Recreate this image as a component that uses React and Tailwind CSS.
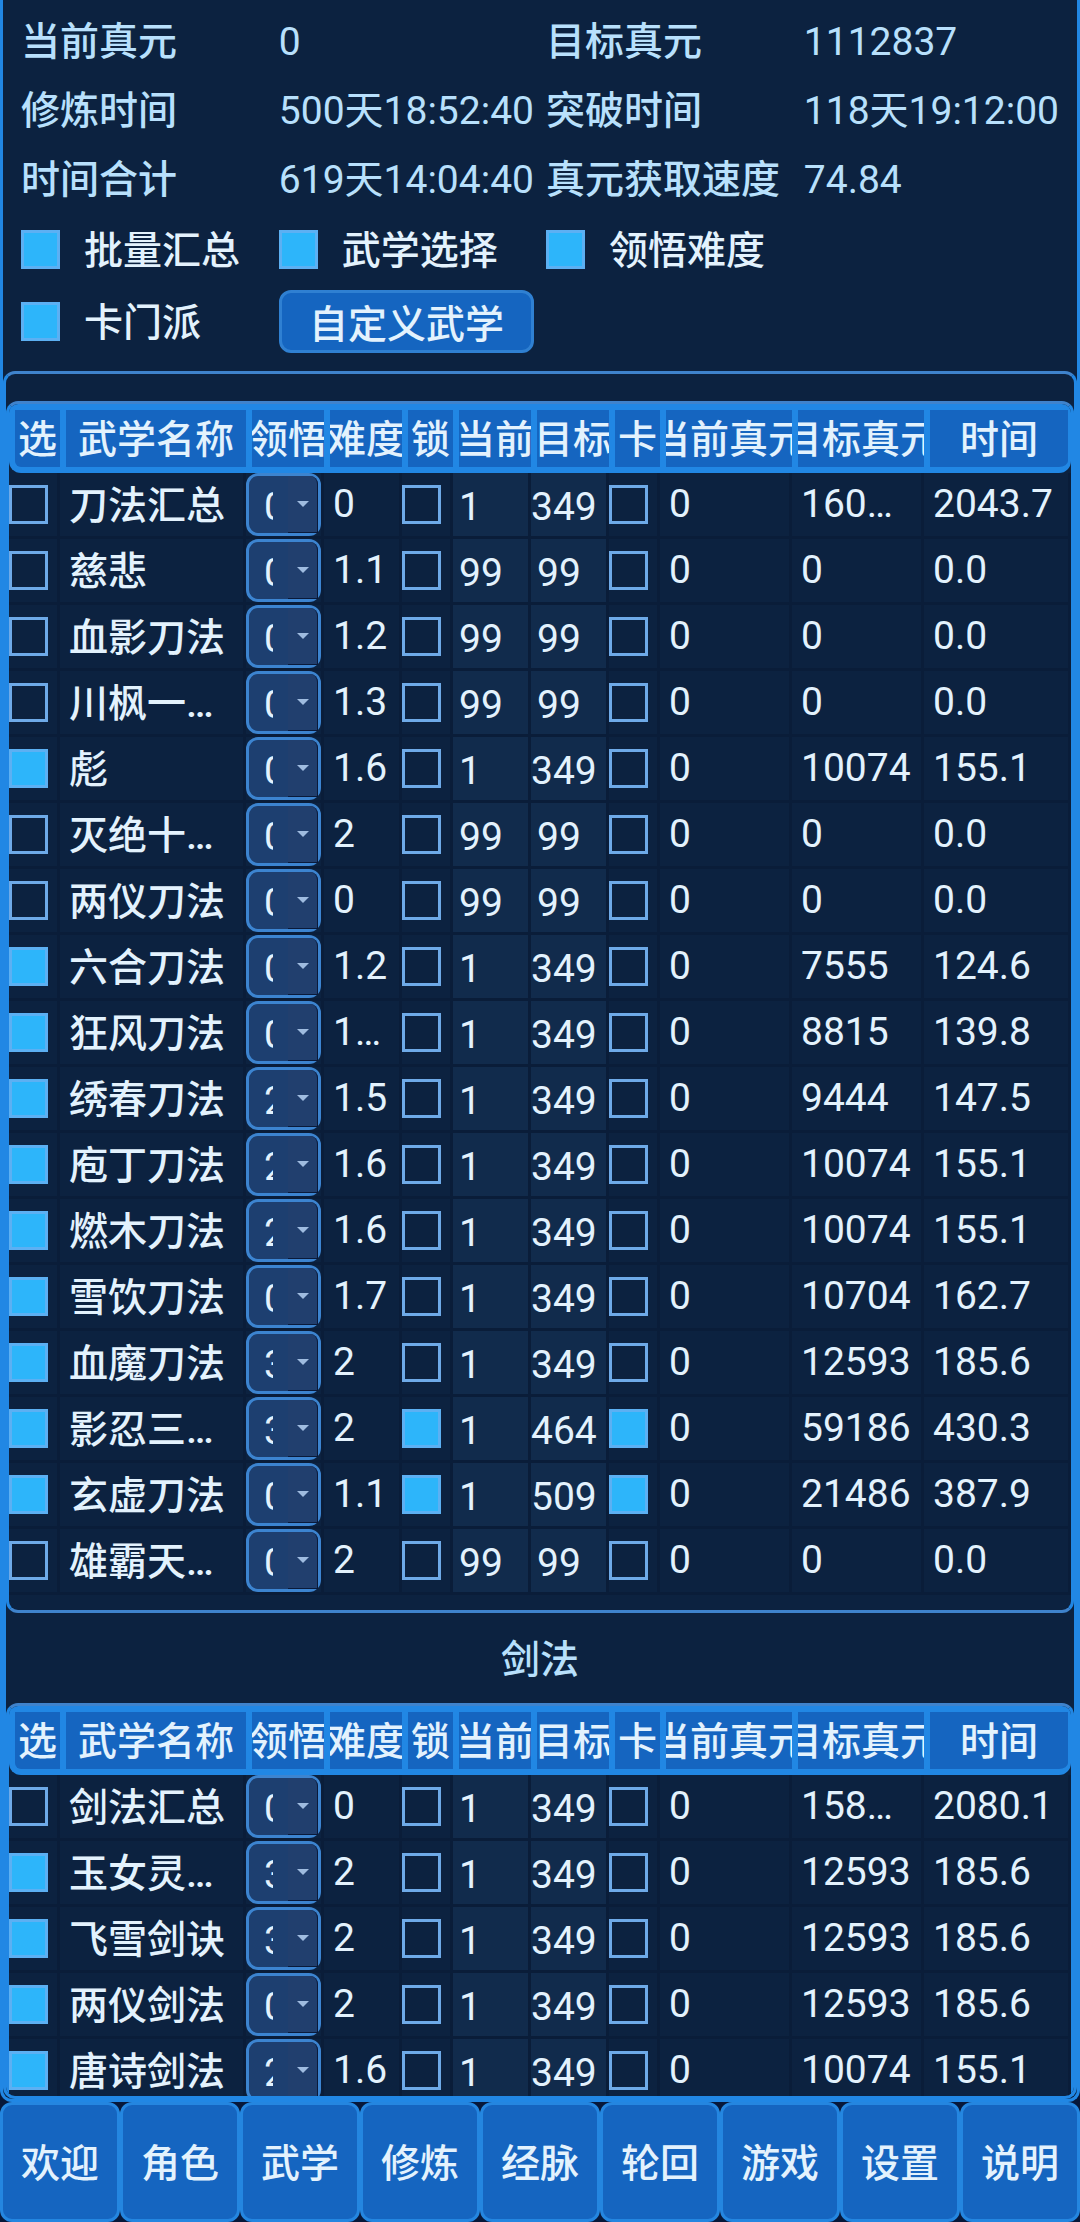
import React from "react";

const stats = [
  ["当前真元", "0"],
  ["目标真元", "1112837"],
  ["修炼时间", "500天18:52:40"],
  ["突破时间", "118天19:12:00"],
  ["时间合计", "619天14:04:40"],
  ["真元获取速度", "74.84"],
];

const headers = ["选", "武学名称", "领悟", "难度", "锁", "当前", "目标", "卡", "当前真元", "目标真元", "时间"];

// selected, name, insight, difficulty, locked, current, target, gated, current energy, target energy, time
const blades = [
  [0, "刀法汇总", "0", "0", 0, "1", "349", 0, "0", "160…", "2043.7"],
  [0, "慈悲", "0", "1.1", 0, "99", "99", 0, "0", "0", "0.0"],
  [0, "血影刀法", "0", "1.2", 0, "99", "99", 0, "0", "0", "0.0"],
  [0, "川枫一…", "0", "1.3", 0, "99", "99", 0, "0", "0", "0.0"],
  [1, "彪", "0", "1.6", 0, "1", "349", 0, "0", "10074", "155.1"],
  [0, "灭绝十…", "0", "2", 0, "99", "99", 0, "0", "0", "0.0"],
  [0, "两仪刀法", "0", "0", 0, "99", "99", 0, "0", "0", "0.0"],
  [1, "六合刀法", "0", "1.2", 0, "1", "349", 0, "0", "7555", "124.6"],
  [1, "狂风刀法", "0", "1…", 0, "1", "349", 0, "0", "8815", "139.8"],
  [1, "绣春刀法", "2", "1.5", 0, "1", "349", 0, "0", "9444", "147.5"],
  [1, "庖丁刀法", "2", "1.6", 0, "1", "349", 0, "0", "10074", "155.1"],
  [1, "燃木刀法", "2", "1.6", 0, "1", "349", 0, "0", "10074", "155.1"],
  [1, "雪饮刀法", "0", "1.7", 0, "1", "349", 0, "0", "10704", "162.7"],
  [1, "血魔刀法", "3", "2", 0, "1", "349", 0, "0", "12593", "185.6"],
  [1, "影忍三…", "3", "2", 1, "1", "464", 1, "0", "59186", "430.3"],
  [1, "玄虚刀法", "0", "1.1", 1, "1", "509", 1, "0", "21486", "387.9"],
  [0, "雄霸天…", "0", "2", 0, "99", "99", 0, "0", "0", "0.0"],
];

const swords = [
  [0, "剑法汇总", "0", "0", 0, "1", "349", 0, "0", "158…", "2080.1"],
  [1, "玉女灵…", "3", "2", 0, "1", "349", 0, "0", "12593", "185.6"],
  [1, "飞雪剑诀", "3", "2", 0, "1", "349", 0, "0", "12593", "185.6"],
  [1, "两仪剑法", "0", "2", 0, "1", "349", 0, "0", "12593", "185.6"],
  [1, "唐诗剑法", "2", "1.6", 0, "1", "349", 0, "0", "10074", "155.1"],
];

const tabs = ["欢迎", "角色", "武学", "修炼", "经脉", "轮回", "游戏", "设置", "说明"];

function Check({ on, label }) {
  return (
    <input
      type="checkbox"
      defaultChecked={Boolean(on)}
      aria-label={label}
      className="block size-[39px] shrink-0 appearance-none border-3 border-[#6eaae8] checked:border-[#5cb0f3] checked:bg-[#2db5fa]"
    />
  );
}

function Toggle({ children }) {
  return (
    <label className="flex h-[57px] items-center gap-6 font-medium whitespace-nowrap text-[#e3f2fd]">
      <Check on />
      <span className="pt-1">{children}</span>
    </label>
  );
}

function Insight({ value, label }) {
  return (
    <div className="relative h-[63px] w-[75px]">
      <select
        aria-label={label}
        defaultValue={value}
        className="block h-full w-full appearance-none rounded-xl border-3 border-[#3c84d0] bg-[#1d3f70] pt-[3px] pr-[45px] pl-[15px] text-[#e3f2fd]"
      >
        {["0", "1", "2", "3"].map((n) => (
          <option key={n}>{n}</option>
        ))}
      </select>
      <span className="pointer-events-none absolute top-[3px] right-[3px] flex h-[57px] w-[30px] items-center justify-center rounded-tr-lg border-r border-b border-[#0a1a3a] bg-[#213f6e]">
        <svg viewBox="0 0 12 6" className="h-[6px] w-[12px] fill-[#9fbce0]" aria-hidden="true">
          <path d="M0 0h12L6 6z" />
        </svg>
      </span>
    </div>
  );
}

function Cell({ children, className = "" }) {
  return (
    <td className="h-[66px] overflow-hidden border-r-3 border-b-3 border-[#0a1d39] p-0">
      <div className={"overflow-hidden whitespace-nowrap " + className}>{children}</div>
    </td>
  );
}

function Level({ value, label }) {
  return (
    <td className="h-[66px] border-r-3 border-b-3 border-[#0a1d39] bg-[#112b4c] p-0">
      <input
        type="text"
        defaultValue={value}
        aria-label={label}
        className={"block h-[63px] w-full pt-1 outline-none " + (value.length > 2 ? "pl-0" : "pl-[6px]")}
      />
    </td>
  );
}

function SkillTable({ rows, label }) {
  return (
    <div className="overflow-hidden rounded-xl border-3 border-x-[#2187e4] border-y-[#3f83cc] pb-[15px]">
      <table aria-label={label} className="w-full table-fixed border-separate border-spacing-0 text-left">
        <colgroup>
          <col className="w-[51px]" />
          <col className="w-[186px]" />
          <col className="w-[78px]" />
          <col className="w-[78px]" />
          <col className="w-[51px]" />
          <col className="w-[78px]" />
          <col className="w-[78px]" />
          <col className="w-[51px]" />
          <col className="w-[132px]" />
          <col className="w-[132px]" />
          <col />
        </colgroup>
        <thead>
          <tr>
            {headers.map((h) => (
              <th
                key={h}
                scope="col"
                className="h-[69px] border-y-6 border-l-6 border-[#2187e4] bg-[#1565c0] p-0 font-medium first:rounded-bl-xl last:rounded-br-xl last:border-r-3"
              >
                <div className="flex h-[57px] items-center justify-center overflow-hidden pt-1 whitespace-nowrap">{h}</div>
              </th>
            ))}
          </tr>
        </thead>
        <tbody>
          {rows.map(([sel, name, insight, diff, lock, cur, goal, gate, curE, goalE, time]) => (
            <tr key={name}>
              <Cell>
                <Check on={sel} label={name + " 选"} />
              </Cell>
              <Cell className="pt-1 pl-[9px] font-medium">{name}</Cell>
              <Cell>
                <Insight value={insight} label={name + " 领悟"} />
              </Cell>
              <Cell className="pl-[9px]">{diff}</Cell>
              <Cell>
                <Check on={lock} label={name + " 锁"} />
              </Cell>
              <Level value={cur} label={name + " 当前"} />
              <Level value={goal} label={name + " 目标"} />
              <Cell>
                <Check on={gate} label={name + " 卡"} />
              </Cell>
              <Cell className="pl-[9px]">{curE}</Cell>
              <Cell className="pl-[9px]">{goalE}</Cell>
              <Cell className="pl-[9px]">{time}</Cell>
            </tr>
          ))}
        </tbody>
      </table>
    </div>
  );
}

export default function App() {
  return (
    <div className="flex h-screen flex-col overflow-hidden bg-[#07183a] font-['Roboto','Noto_Sans_CJK_SC',sans-serif] text-[39px] leading-[57px] text-[#e3f2fd]">
      <main className="flex min-h-0 flex-1 flex-col rounded-b-xl border-x-3 border-b-3 border-[#2187e4] bg-[#0c2240]">
        <section className="grid grid-cols-[246fr_255fr_246fr_255fr] items-center gap-3 px-[18px] pt-[14px] pb-[18px] whitespace-nowrap text-[#b8e0fc]">
          {stats.map(([k, v]) => (
            <React.Fragment key={k}>
              <span className="font-medium">{k}</span>
              <span>{v}</span>
            </React.Fragment>
          ))}
          <Toggle>批量汇总</Toggle>
          <Toggle>武学选择</Toggle>
          <Toggle>领悟难度</Toggle>
          <span />
          <Toggle>卡门派</Toggle>
          <button
            type="button"
            className="h-[63px] rounded-xl border-3 border-[#2f80d2] bg-[#1565c0] pt-1 font-medium text-[#e3f2fd]"
          >
            自定义武学
          </button>
        </section>

        <div className="min-h-0 flex-1 overflow-hidden rounded-xl border-3 border-x-[#2187e4] border-t-[#3f83cc] border-b-[#2187e4] pt-[27px]">
          <SkillTable rows={blades} label="刀法" />
          <h2 className="flex h-[90px] items-center justify-center pt-1 font-medium text-[#b8e0fc]">剑法</h2>
          <SkillTable rows={swords} label="剑法" />
        </div>
      </main>

      <nav className="grid h-[120px] shrink-0 grid-cols-9">
        {tabs.map((t) => (
          <button key={t} type="button" className="rounded-xl border-3 border-[#2486e0] bg-[#1565c0] pt-1 font-medium whitespace-nowrap">
            {t}
          </button>
        ))}
      </nav>
    </div>
  );
}
